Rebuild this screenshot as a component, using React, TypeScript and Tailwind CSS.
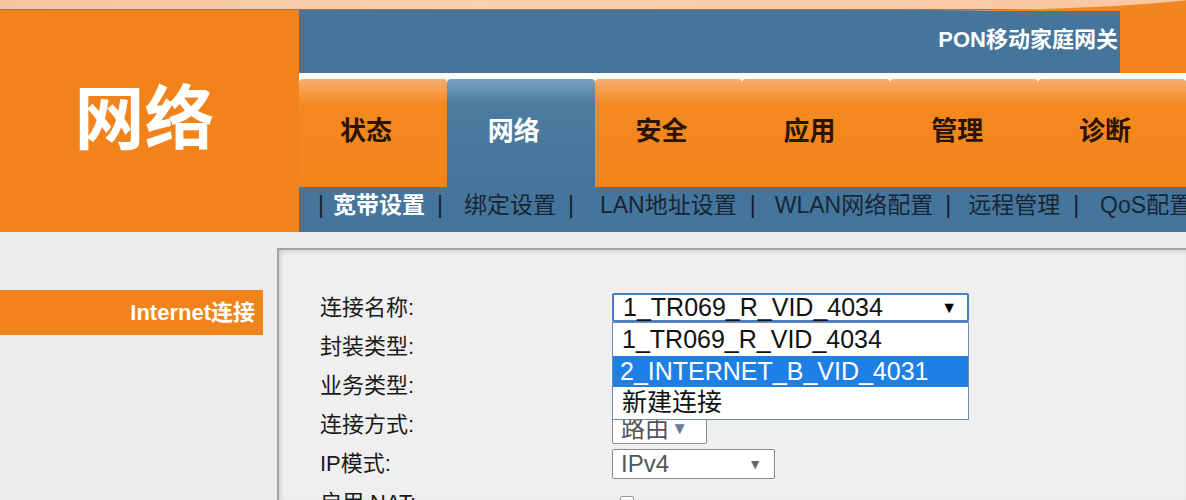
import React from "react";

const tabs = ["状态", "网络", "安全", "应用", "管理", "诊断"];

const subnav: { text: string; ml: string; active?: boolean; sep?: boolean }[] = [
  { text: "|", ml: "ml-[19px]", sep: true },
  { text: "宽带设置", ml: "ml-[9px]", active: true },
  { text: "|", ml: "ml-[12px]", sep: true },
  { text: "绑定设置", ml: "ml-[21px]" },
  { text: "|", ml: "ml-[12px]", sep: true },
  { text: "LAN地址设置", ml: "ml-[26px]" },
  { text: "|", ml: "ml-[13px]", sep: true },
  { text: "WLAN网络配置", ml: "ml-[19px]" },
  { text: "|", ml: "ml-[12px]", sep: true },
  { text: "远程管理", ml: "ml-[17px]" },
  { text: "|", ml: "ml-[13px]", sep: true },
  { text: "QoS配置", ml: "ml-[21px]" },
];

function TopBand() {
  return (
    <div className="relative h-[10px] bg-[linear-gradient(to_right,#f7c4a0,#fbd0ae_40%,#f9c8a2)] border-b border-[#a47457]">
      <svg className="absolute right-0 top-0" width="260" height="11" viewBox="0 0 260 11">
        <path d="M0 11 C 90 10, 190 8, 260 0 L260 11 Z" fill="#f49a52" />
        <path d="M60 11 C 140 9, 210 6, 260 1 L260 11 Z" fill="#f2861e" />
      </svg>
    </div>
  );
}

function Header() {
  return (
    <div className="flex h-[222px]">
      <div className="flex w-[299px] shrink-0 items-center justify-center bg-[#f2831a] pb-[14px] pr-[10px]">
        <span className="text-[70px] font-bold leading-none text-white font-['Noto_Sans_CJK_SC',sans-serif]">
          网络
        </span>
      </div>
      <div className="flex min-w-0 flex-1 flex-col">
        <div className="flex h-[63px]">
          <div className="flex flex-1 items-center justify-end bg-[#45759a] pb-[4px] pr-[2px]">
            <span className="text-[22px] font-bold text-white font-['Liberation_Sans','Noto_Sans_CJK_SC',sans-serif]">
              PON移动家庭网关
            </span>
          </div>
          <div className="w-[66px] bg-[#f2831a]" />
        </div>
        <div className="h-[6px] bg-[#fbfbfb]" />
        <div className="flex h-[108px] bg-[#fbfbfb]">
          {tabs.map((t) => (
            <div
              key={t}
              className={
                t === "网络"
                  ? "flex flex-1 items-center justify-center rounded-t-[4px] bg-[linear-gradient(to_bottom,#7aa2c0_0%,#4d7ca1_22%,#45759a_100%)] pb-[10px] pr-[14px]"
                  : "flex flex-1 items-center justify-center rounded-t-[4px] bg-[linear-gradient(to_bottom,#f7ae70_0%,#f3891f_24%,#f2841a_100%)] pb-[10px] pr-[14px]"
              }
            >
              <span
                className={
                  t === "网络"
                    ? "text-[26px] font-bold text-white font-['Noto_Sans_CJK_SC',sans-serif]"
                    : "text-[26px] font-bold text-[#2a1406] font-['Noto_Sans_CJK_SC',sans-serif]"
                }
              >
                {t}
              </span>
            </div>
          ))}
        </div>
        <div className="flex h-[45px] items-center overflow-hidden whitespace-nowrap bg-[#45759a] pb-[8px] font-['Liberation_Sans','Noto_Sans_CJK_SC',sans-serif] text-[23px]">
          {subnav.map((s, i) => (
            <span
              key={i}
              className={
                s.ml +
                " shrink-0" +
                (s.active
                  ? " font-bold text-white"
                  : s.sep
                  ? " text-[#15202c]"
                  : " text-[#172636]")
              }
            >
              {s.text}
            </span>
          ))}
        </div>
      </div>
    </div>
  );
}

function Row({ label, children }: { label: string; children?: React.ReactNode }) {
  return (
    <div className="relative flex h-[39px] items-center">
      <div className="w-[292px] text-[22px] text-[#1a1a1a]">{label}</div>
      {children}
    </div>
  );
}

function Form() {
  return (
    <div className="relative flex-1 mt-[16px] border-l-2 border-t-2 border-[#a3a3a3] bg-[#efefef] shadow-[inset_2px_2px_4px_rgba(0,0,0,0.12)]">
      <div className="pl-[41px] pt-[38px] font-['Liberation_Sans','Noto_Sans_CJK_SC',sans-serif]">
        <Row label="连接名称:">
          <div className="relative z-10">
            <div className="flex h-[29px] w-[357px] items-center justify-between rounded-[2px] border-2 border-[#4a7cbf] bg-white pl-[9px] pr-[10px]">
              <span className="text-[25px] leading-none text-[#111]">1_TR069_R_VID_4034</span>
              <span className="text-[16px] leading-none text-black">▼</span>
            </div>
            <div className="absolute left-0 top-[29px] w-[357px] border border-[#6c8db8] bg-white">
              <div className="flex h-[33px] items-center pl-[9px] text-[25px] text-[#111]">1_TR069_R_VID_4034</div>
              <div className="flex h-[31px] items-center bg-[#1e80e4] pl-[7px] text-[25px] text-white">
                2_INTERNET_B_VID_4031
              </div>
              <div className="flex h-[32px] items-center pl-[9px] text-[25px] text-[#111]">新建连接</div>
            </div>
          </div>
        </Row>
        <Row label="封装类型:" />
        <Row label="业务类型:" />
        <Row label="连接方式:">
          <div className="mt-[8px] flex h-[30px] w-[95px] items-center justify-between rounded-[2px] border border-[#8c8c8c] bg-white pl-[8px] pr-[18px]">
            <span className="text-[24px] leading-none text-[#555]">路由</span>
            <span className="text-[17px] leading-none text-[#6a7a90]">▼</span>
          </div>
        </Row>
        <Row label="IP模式:">
          <div className="flex h-[30px] w-[163px] items-center justify-between rounded-[2px] border border-[#8c8c8c] bg-white pl-[8px] pr-[12px]">
            <span className="text-[24px] leading-none text-[#555]">IPv4</span>
            <span className="text-[14px] leading-none text-[#666]">▼</span>
          </div>
        </Row>
        <Row label="启用 NAT:">
          <div className="ml-[8px] h-[14px] w-[14px] rounded-[2px] border border-[#999] bg-white" />
        </Row>
      </div>
    </div>
  );
}

export default function App() {
  return (
    <div className="h-[500px] w-[1186px] overflow-hidden bg-[#ececec]">
      <TopBand />
      <Header />
      <div className="flex h-[268px]">
        <div className="w-[277px] shrink-0 pt-[58px]">
          <div className="flex h-[45px] w-[263px] items-center justify-end bg-[#f2831a] pr-[8px]">
            <span className="text-[22px] font-bold text-white font-['Liberation_Sans','Noto_Sans_CJK_SC',sans-serif]">
              Internet连接
            </span>
          </div>
        </div>
        <Form />
      </div>
    </div>
  );
}
